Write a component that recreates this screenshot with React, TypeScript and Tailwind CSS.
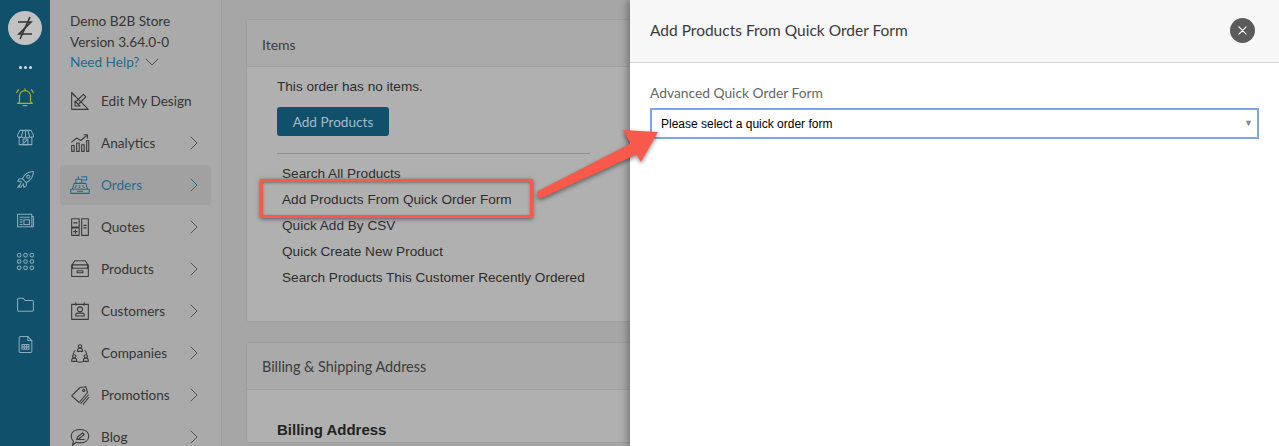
import type { ReactNode } from "react";

function Icon({ children, size = 20, className = "" }: { children: ReactNode; size?: number; className?: string }) {
  return (
    <svg width={size} height={size} viewBox="0 0 24 24" fill="none" stroke="currentColor" strokeWidth="1.3" strokeLinecap="round" strokeLinejoin="round" className={className}>
      {children}
    </svg>
  );
}

const railIcons = [
  {
    key: "store",
    h: "h-[42px]",
    icon: (
      <>
        <path d="M4 11v10h16V11" />
        <path d="M5 3h14l3 6a2.500 2.500 0 0 1-5 1 2.500 2.500 0 0 1-5 0 2.500 2.500 0 0 1-5 0 2.500 2.500 0 0 1-5-1z" />
        <path d="M9 3 7 10M15 3l2 7M12 3v7" />
        <path d="M9 14h6v7H9z" />
        <path d="m10 19 4-4" />
      </>
    ),
  },
  {
    key: "rocket",
    h: "h-[42px]",
    icon: (
      <>
        <path d="M22 2c-6 0-11 3-14 9l5 5c6-3 9-8 9-14z" />
        <circle cx="15.5" cy="8.5" r="2" />
        <path d="M8 11H4l-2 3 5 1M13 16v4l-3 2-1-5" />
        <path d="m6 17-4 5M5 20l-1 2M8 19l-2 3" />
      </>
    ),
  },
  {
    key: "news",
    h: "h-[41px]",
    icon: (
      <>
        <path d="M2 4h18v16H2z" />
        <path d="M20 7h2v13h-2" />
        <path d="M5 8h12M5 11h3M5 14h3M5 17h3" />
        <path d="M10 11h7v6h-7z" />
      </>
    ),
  },
  {
    key: "grid",
    h: "h-[40px]",
    icon: (
      <>
        {[4, 12, 20].flatMap((y) =>
          [4, 12, 20].map((x) => <circle key={`${x}-${y}`} cx={x} cy={y} r="2.3" />)
        )}
      </>
    ),
  },
  {
    key: "folder",
    h: "h-[46px]",
    icon: <path d="M2 19V5.500A1.500 1.500 0 0 1 3.500 4H9l2.500 3h9A1.500 1.500 0 0 1 22 8.500V19a1.500 1.500 0 0 1-1.500 1.500h-17A1.500 1.500 0 0 1 2 19z" />,
  },
  {
    key: "file",
    h: "h-[34px]",
    icon: (
      <>
        <path d="M4 3.500A1.500 1.500 0 0 1 5.500 2H15l5 5v13.500a1.500 1.500 0 0 1-1.500 1.500h-13A1.500 1.500 0 0 1 4 20.500z" />
        <path d="M15 2v5h5" />
        <path d="M7.500 12h9v6h-9zM7.500 15h9M10.500 12v6M13.500 12v6" />
      </>
    ),
  },
];

const navItems = [
  {
    label: "Analytics",
    icon: (
      <>
        <path d="M2 15h3v7H2zM8 12h3v10H8zM14 14h3v8h-3zM20 9h2.500v13H20z" />
        <path d="m2 11 6-5 5 3 7-6" />
        <path d="M17 2h4v4" />
      </>
    ),
  },
  {
    label: "Orders",
    active: true,
    icon: (
      <>
        <path d="M1 17h22v5H1z" />
        <path d="m3 17 2-7h14l2 7" />
        <path d="M7 10V5h7v5M10 5V2M14 6h6V2h-6" />
        <path d="M9 19.500h6M7 13h1M11 13h1M15 13h1M6 15h1M11 15h1M16 15h1" />
      </>
    ),
  },
  {
    label: "Quotes",
    icon: (
      <>
        <path d="M2 2h9v10H2zM2 13h9v9H2zM14 2h8v20h-8z" />
        <path d="M4.500 7h4M4.500 17.500h4M6.500 15.500v4M16.500 10h3M16.500 13h3" />
      </>
    ),
  },
  {
    label: "Products",
    icon: (
      <>
        <path d="M3 11V6l3-4h12l3 4v5" />
        <path d="M2 11h20v10H2zM2 11V7h20v4" />
        <path d="M8.500 14h7v2.500h-7z" />
      </>
    ),
  },
  {
    label: "Customers",
    icon: (
      <>
        <path d="M2 4h20v18H2zM7 2v3M17 2v3" />
        <circle cx="12" cy="10" r="3" />
        <path d="M7 18v-1.500a2 2 0 0 1 2-2h6a2 2 0 0 1 2 2V18z" />
      </>
    ),
  },
  {
    label: "Companies",
    icon: (
      <>
        <circle cx="12" cy="4" r="2" />
        <path d="M9 10V9a3 3 0 0 1 6 0v1z" />
        <circle cx="5" cy="16" r="2" />
        <path d="M2 22v-1a3 3 0 0 1 6 0v1z" />
        <circle cx="19" cy="16" r="2" />
        <path d="M16 22v-1a3 3 0 0 1 6 0v1z" />
        <path d="M6 9a9 9 0 0 0-2 4M18 9a9 9 0 0 1 2 4M9 22.500a9 9 0 0 0 6 0" />
      </>
    ),
  },
  {
    label: "Promotions",
    icon: (
      <>
        <path d="M2 13 12 3l7-1 2 7-10 12z" />
        <circle cx="16.500" cy="6.500" r="1.300" />
        <path d="m13 22 9-10M16 23l6.500-8" />
      </>
    ),
  },
  {
    label: "Blog",
    icon: (
      <>
        <path d="M12 3c6 0 10.500 3 10.500 8s-4.500 8-10.500 8c-1.500 0-3-.2-4.500-.7L3 22l1-5c-2-1.500-2.500-3.500-2.500-6C1.500 6 6 3 12 3z" />
        <path d="m8 15 1-3 6-5 2 2-6 5zM8 15h9" />
      </>
    ),
  },
];

const orderLinks = [
  "Search All Products",
  "Add Products From Quick Order Form",
  "Quick Add By CSV",
  "Quick Create New Product",
  "Search Products This Customer Recently Ordered",
];

function Chevron() {
  return (
    <svg width="8" height="14" viewBox="0 0 8 14" fill="none" stroke="currentColor" strokeWidth="1" strokeLinecap="round" strokeLinejoin="round">
      <path d="m1 1 6 6-6 6" />
    </svg>
  );
}

function Rail() {
  return (
    <aside className="flex w-[50px] shrink-0 flex-col items-center bg-[#10506b] pt-[11px] text-[#8cacbb]">
      <div className="flex h-[34px] w-[34px] items-center justify-center rounded-full bg-[#c2c2c2] text-[#333]">
        <svg width="18" height="24" viewBox="0 0 18 24" fill="none" stroke="currentColor" strokeWidth="1.6">
          <path d="M2 6h13L3 18h13" />
          <path d="M14 1 4 23" />
        </svg>
      </div>
      <div className="mt-[20px] flex h-[4px] items-center gap-[2px]">
        <span className="h-[3px] w-[3px] rounded-full bg-[#d5dfe4]" />
        <span className="h-[3px] w-[3px] rounded-full bg-[#d5dfe4]" />
        <span className="h-[3px] w-[3px] rounded-full bg-[#d5dfe4]" />
      </div>
      <div className="mt-[16px] flex h-[24px] items-center text-[#a3b42d]">
        <Icon size={22}>
          <path d="M6 17V11a6 6 0 0 1 12 0v6l2 2H4z" />
          <path d="M10 21.500h4M12 3v2M3 7l2-3M21 7l-2-3" />
        </Icon>
      </div>
      <div className="mt-[7px] flex w-full flex-col items-center">
        {railIcons.map((item) => (
          <div key={item.key} className={`flex ${item.h} items-center justify-center`}>
            <Icon size={19}>{item.icon}</Icon>
          </div>
        ))}
      </div>
    </aside>
  );
}

function Sidebar() {
  return (
    <nav className="w-[172px] shrink-0 border-r border-[#9c9c9c] bg-[#aaaaaa] pl-[10px] pr-[10px] pt-[11px] font-['Lato',sans-serif] text-[13.6px] text-[#363636]">
      <div className="pl-[10px]">
        <p className="h-[21px] leading-[21px]">Demo B2B Store</p>
        <p className="h-[20px] leading-[21px]">Version 3.64.0-0</p>
        <p className="flex h-[20px] items-center gap-[6px] leading-[20px] text-[#1f6c91]">
          Need Help?
          <svg width="14" height="8" viewBox="0 0 14 8" fill="none" stroke="#4d4d4d" strokeWidth="1" strokeLinecap="round" strokeLinejoin="round">
            <path d="m1 1 6 6 6-6" />
          </svg>
        </p>
      </div>
      <div className="mt-[9px] flex h-[40px] items-center pl-[10px]">
        <Icon size={20} className="shrink-0 text-[#3a3a3a]">
          <path d="M2 2v20h20zM6 12v6h6z" />
          <path d="m8 12 8-8 3 3-8 8M2 2l4 4" />
        </Icon>
        <span className="ml-[11px]">Edit My Design</span>
      </div>
      <ul className="mt-[2px] flex flex-col gap-[2px]">
        {navItems.map((item) => (
          <li
            key={item.label}
            className={`flex h-[40px] items-center rounded-[3px] pl-[10px] pr-[13px] ${item.active ? "bg-[#a1a1a1] text-[#1f6c91]" : ""}`}
          >
            <Icon size={20} className={`shrink-0 ${item.active ? "" : "text-[#3a3a3a]"}`}>
              {item.icon}
            </Icon>
            <span className="ml-[11px] flex-1">{item.label}</span>
            <span className={item.active ? "text-[#1f6c91]" : "text-[#555]"}>
              <Chevron />
            </span>
          </li>
        ))}
      </ul>
    </nav>
  );
}

function Main() {
  return (
    <main className="min-w-0 flex-1 overflow-hidden bg-[#a6a6a6] pl-[24px] pt-[19px] text-[13.6px]">
      <section className="w-[420px] rounded-[3px] border border-[#9e9e9e] bg-[#b0b0b0]">
        <h2 className="flex h-[47px] items-center border-b border-[#a1a1a1] bg-[#aaaaaa] pl-[15px] pt-[2px] font-['Lato',sans-serif] text-[14px] font-normal text-[#3c3c3c]">
          Items
        </h2>
        <div className="h-[254px] pl-[30px] pt-[10px] font-['Liberation_Sans',sans-serif] text-[#2d2d2d]">
          <p className="h-[20px] leading-[20px]">This order has no items.</p>
          <button className="mt-[10px] h-[29px] w-[112px] rounded-[3px] bg-[#10506b] pt-[1px] font-['Lato',sans-serif] text-[13.6px] text-[#a3bcc8]">
            Add Products
          </button>
          <div className="mt-[17px] h-px w-[313px] bg-[#8e8e8e]" />
          <ul className="mt-[7px] pl-[5px]">
            {orderLinks.map((link) => (
              <li key={link} className="h-[26px] leading-[26px]">
                {link}
              </li>
            ))}
          </ul>
        </div>
      </section>
      <section className="mt-[20px] w-[420px] rounded-[3px] border border-[#9e9e9e] bg-[#b0b0b0]">
        <h2 className="flex h-[47px] items-center border-b border-[#a1a1a1] bg-[#aaaaaa] pl-[15px] pt-[2px] font-['Lato',sans-serif] text-[14.4px] font-normal text-[#3c3c3c]">
          Billing &amp; Shipping Address
        </h2>
        <h3 className="pl-[30px] pt-[29px] font-['Liberation_Sans',sans-serif] text-[15px] font-bold text-[#222]">
          Billing Address
        </h3>
      </section>
    </main>
  );
}

function QuickOrderPanel() {
  return (
    <section className="relative w-[649px] shrink-0 bg-white shadow-[-3px_0_7px_rgba(0,0,0,0.3)]">
      <header className="flex h-[63px] items-center justify-between border-b border-[#d6d6d6] bg-[#f7f7f7] pb-[2px] pl-[20px] pr-[24px]">
        <h1 className="pt-[1px] font-['Lato',sans-serif] text-[15.5px] font-normal text-[#3a3a3a]">Add Products From Quick Order Form</h1>
        <button className="flex h-[25px] w-[25px] items-center justify-center rounded-full bg-[#5b5b5b] text-white">
          <svg width="9" height="9" viewBox="0 0 10 10" stroke="currentColor" strokeWidth="1.300" strokeLinecap="round">
            <path d="m1 1 8 8M9 1 1 9" />
          </svg>
        </button>
      </header>
      <div className="pl-[20px] pr-[20px] pt-[20px]">
        <label className="block h-[20px] font-['Lato',sans-serif] text-[13.8px] leading-[20px] text-[#666]">Advanced Quick Order Form</label>
        <div className="mt-[5px] flex h-[31px] items-center justify-between border-2 border-[#7aa6ec] pl-[9px] pr-[4px] font-['Liberation_Sans',sans-serif] text-[12px] text-black">
          <span>Please select a quick order form</span>
          <span className="text-[9px] text-[#888]">▼</span>
        </div>
      </div>
    </section>
  );
}

export default function App() {
  return (
    <div className="relative flex h-[446px] w-[1279px] overflow-hidden">
      <Rail />
      <Sidebar />
      <Main />
      <QuickOrderPanel />
      {/* annotation on top of the screenshot */}
      <div className="absolute left-[260px] top-[179px] h-[39px] w-[273px] border-[3px] border-[#f9594a] shadow-[0_1px_4px_rgba(0,0,0,0.5),inset_0_1px_3px_rgba(0,0,0,0.35)]" />
      <svg className="absolute left-[530px] top-[120px] drop-shadow-[0_2px_2px_rgba(0,0,0,0.45)]" width="140" height="90" viewBox="0 0 140 90" fill="#f9594a">
        <circle cx="11" cy="74" r="4" />
        <path d="M12.800 77.600 114.900 30.800 109.100 19.200 9.200 70.400z" />
        <path d="M128 12 93 10 111 42z" />
      </svg>
    </div>
  );
}
